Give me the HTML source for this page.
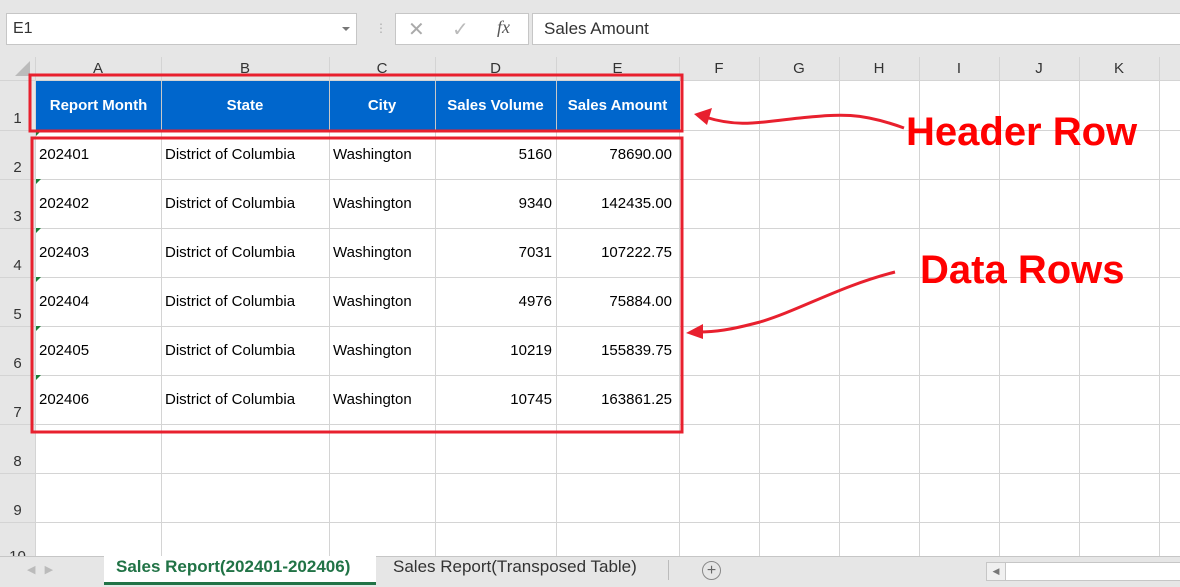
<!DOCTYPE html>
<html><head><style>
body{margin:0;width:1180px;height:586px;overflow:hidden;background:#fff;font-family:"Liberation Sans",sans-serif;position:relative}
.a{position:absolute}
.c{position:absolute;font-size:15px;color:#000;white-space:nowrap}
.h{position:absolute;font-size:15px;color:#fff;font-weight:bold;text-align:center;white-space:nowrap}
.ch{position:absolute;top:60px;font-size:15px;color:#333;text-align:center}
.rh{position:absolute;left:0;width:35px;text-align:center;font-size:15px;color:#333}
</style></head><body>
<div class="a" style="left:0;top:0;width:1180px;height:57px;background:#e6e6e6"></div>
<div class="a" style="left:6px;top:13px;width:349px;height:30px;background:#fff;border:1px solid #c6c6c6"></div>
<div class="c" style="left:13px;top:20px;color:#333;font-size:16px">E1</div>
<div class="a" style="left:342px;top:27px;border-left:4px solid transparent;border-right:4px solid transparent;border-top:4px solid #777"></div>
<div class="a" style="left:375px;top:21px;color:#aaa;font-size:12px">⋮</div>
<div class="a" style="left:395px;top:13px;width:132px;height:30px;background:#fff;border:1px solid #c6c6c6"></div>
<div class="c" style="left:408px;top:17px;color:#aaa;font-size:20px">✕</div>
<div class="c" style="left:452px;top:17px;color:#bbb;font-size:20px">✓</div>
<div class="c" style="left:497px;top:17px;color:#555;font-size:18px;font-style:italic;font-family:'Liberation Serif',serif">fx</div>
<div class="a" style="left:532px;top:13px;width:660px;height:30px;background:#fff;border:1px solid #c6c6c6"></div>
<div class="c" style="left:544px;top:19px;color:#333;font-size:17px">Sales Amount</div>
<svg class="a" style="left:0;top:57px" width="1180" height="500">
<rect x="0" y="0" width="1180" height="23" fill="#e6e6e6"/>
<rect x="0" y="0" width="35" height="500" fill="#e6e6e6"/>
<polygon points="30,4 30,19 15,19" fill="#bbb"/>
<g stroke="#d4d4d4" stroke-width="1">
<line x1="161.5" y1="0" x2="161.5" y2="500"/><line x1="329.5" y1="0" x2="329.5" y2="500"/><line x1="435.5" y1="0" x2="435.5" y2="500"/><line x1="556.5" y1="0" x2="556.5" y2="500"/><line x1="679.5" y1="0" x2="679.5" y2="500"/><line x1="759.5" y1="0" x2="759.5" y2="500"/><line x1="839.5" y1="0" x2="839.5" y2="500"/><line x1="919.5" y1="0" x2="919.5" y2="500"/><line x1="999.5" y1="0" x2="999.5" y2="500"/><line x1="1079.5" y1="0" x2="1079.5" y2="500"/><line x1="1159.5" y1="0" x2="1159.5" y2="500"/>
<line x1="0" y1="73.5" x2="1180" y2="73.5"/><line x1="0" y1="122.5" x2="1180" y2="122.5"/><line x1="0" y1="171.5" x2="1180" y2="171.5"/><line x1="0" y1="220.5" x2="1180" y2="220.5"/><line x1="0" y1="269.5" x2="1180" y2="269.5"/><line x1="0" y1="318.5" x2="1180" y2="318.5"/><line x1="0" y1="367.5" x2="1180" y2="367.5"/><line x1="0" y1="416.5" x2="1180" y2="416.5"/><line x1="0" y1="465.5" x2="1180" y2="465.5"/>
<line x1="0" y1="23.5" x2="1180" y2="23.5"/><line x1="35.5" y1="0" x2="35.5" y2="500"/>
</g>
<rect x="36" y="24" width="644" height="49" fill="#0066cc"/>
<g stroke="#c8c8c8"><line x1="161.5" y1="24" x2="161.5" y2="73"/><line x1="329.5" y1="24" x2="329.5" y2="73"/><line x1="435.5" y1="24" x2="435.5" y2="73"/><line x1="556.5" y1="24" x2="556.5" y2="73"/></g>
<g fill="#1a7f37"><polygon points="36,122 41,122 36,127"/><polygon points="36,171 41,171 36,176"/><polygon points="36,220 41,220 36,225"/><polygon points="36,269 41,269 36,274"/><polygon points="36,318 41,318 36,323"/><polygon points="36,74 41,74 36,79"/></g>
</svg>
<div class="ch" style="left:35px;width:126px">A</div><div class="ch" style="left:161px;width:168px">B</div><div class="ch" style="left:329px;width:106px">C</div><div class="ch" style="left:435px;width:121px">D</div><div class="ch" style="left:556px;width:123px">E</div><div class="ch" style="left:679px;width:80px">F</div><div class="ch" style="left:759px;width:80px">G</div><div class="ch" style="left:839px;width:80px">H</div><div class="ch" style="left:919px;width:80px">I</div><div class="ch" style="left:999px;width:80px">J</div><div class="ch" style="left:1079px;width:80px">K</div>
<div class="rh" style="top:110px">1</div><div class="rh" style="top:159px">2</div><div class="rh" style="top:208px">3</div><div class="rh" style="top:257px">4</div><div class="rh" style="top:306px">5</div><div class="rh" style="top:355px">6</div><div class="rh" style="top:404px">7</div><div class="rh" style="top:453px">8</div><div class="rh" style="top:502px">9</div><div class="rh" style="top:548px">10</div>
<div class="h" style="left:36px;width:125px;top:97px">Report Month</div><div class="h" style="left:161px;width:168px;top:97px">State</div><div class="h" style="left:329px;width:106px;top:97px">City</div><div class="h" style="left:435px;width:121px;top:97px">Sales Volume</div><div class="h" style="left:556px;width:123px;top:97px">Sales Amount</div>
<div id="rows"></div>
<div class="c" style="left:39px;top:146px">202401</div><div class="c" style="left:165px;top:146px">District of Columbia</div><div class="c" style="left:333px;top:146px">Washington</div><div class="c" style="left:435px;width:117px;text-align:right;top:146px">5160</div><div class="c" style="left:556px;width:116px;text-align:right;top:146px">78690.00</div>
<div class="c" style="left:39px;top:195px">202402</div><div class="c" style="left:165px;top:195px">District of Columbia</div><div class="c" style="left:333px;top:195px">Washington</div><div class="c" style="left:435px;width:117px;text-align:right;top:195px">9340</div><div class="c" style="left:556px;width:116px;text-align:right;top:195px">142435.00</div>
<div class="c" style="left:39px;top:244px">202403</div><div class="c" style="left:165px;top:244px">District of Columbia</div><div class="c" style="left:333px;top:244px">Washington</div><div class="c" style="left:435px;width:117px;text-align:right;top:244px">7031</div><div class="c" style="left:556px;width:116px;text-align:right;top:244px">107222.75</div>
<div class="c" style="left:39px;top:293px">202404</div><div class="c" style="left:165px;top:293px">District of Columbia</div><div class="c" style="left:333px;top:293px">Washington</div><div class="c" style="left:435px;width:117px;text-align:right;top:293px">4976</div><div class="c" style="left:556px;width:116px;text-align:right;top:293px">75884.00</div>
<div class="c" style="left:39px;top:342px">202405</div><div class="c" style="left:165px;top:342px">District of Columbia</div><div class="c" style="left:333px;top:342px">Washington</div><div class="c" style="left:435px;width:117px;text-align:right;top:342px">10219</div><div class="c" style="left:556px;width:116px;text-align:right;top:342px">155839.75</div>
<div class="c" style="left:39px;top:391px">202406</div><div class="c" style="left:165px;top:391px">District of Columbia</div><div class="c" style="left:333px;top:391px">Washington</div><div class="c" style="left:435px;width:117px;text-align:right;top:391px">10745</div><div class="c" style="left:556px;width:116px;text-align:right;top:391px">163861.25</div>
<svg class="a" style="left:0;top:0" width="1180" height="586">
<rect x="30" y="75" width="652" height="56" fill="none" stroke="#e8202e" stroke-width="3"/>
<rect x="32" y="138" width="650" height="294" fill="none" stroke="#e8202e" stroke-width="3"/>
<path d="M904 128 C860 112 840 114 800 118 C760 122 740 128 705 117" fill="none" stroke="#e8202e" stroke-width="3"/>
<polygon points="694,114 712,108 707,125" fill="#e8202e"/>
<path d="M895 272 C840 286 800 310 760 322 C730 330 715 332 698 332" fill="none" stroke="#e8202e" stroke-width="3"/>
<polygon points="686,333 703,324 703,339" fill="#e8202e"/>
</svg>
<div class="a" style="left:906px;top:110px;font-size:40px;font-weight:bold;color:#ff0000;white-space:nowrap">Header Row</div>
<div class="a" style="left:920px;top:248px;font-size:40px;font-weight:bold;color:#ff0000;white-space:nowrap">Data Rows</div>
<div class="a" style="left:0;top:556px;width:1180px;height:30px;background:#e6e6e6;border-top:1px solid #c6c6c6"></div>
<div class="c" style="left:27px;top:563px;color:#bbb;font-size:11px">◀ &nbsp; ▶</div>
<div class="a" style="left:104px;top:556px;width:272px;height:26px;background:#fff;border-bottom:3px solid #217346"></div>
<div class="c" style="left:116px;top:557px;color:#217346;font-weight:bold;font-size:17px">Sales Report(202401-202406)</div>
<div class="c" style="left:393px;top:557px;color:#333;font-size:17px">Sales Report(Transposed Table)</div>
<div class="a" style="left:668px;top:560px;width:1px;height:20px;background:#bbb"></div>
<div class="a" style="left:702px;top:561px;width:17px;height:17px;border:1px solid #888;border-radius:50%;text-align:center;line-height:17px;color:#666;font-size:16px">+</div>
<div class="a" style="left:986px;top:562px;width:194px;height:17px;background:#fff;border:1px solid #c6c6c6"></div>
<div class="a" style="left:986px;top:562px;width:18px;height:17px;background:#f0f0f0;border:1px solid #c6c6c6;font-size:9px;color:#777;text-align:center;line-height:17px">◀</div>
</body></html>
